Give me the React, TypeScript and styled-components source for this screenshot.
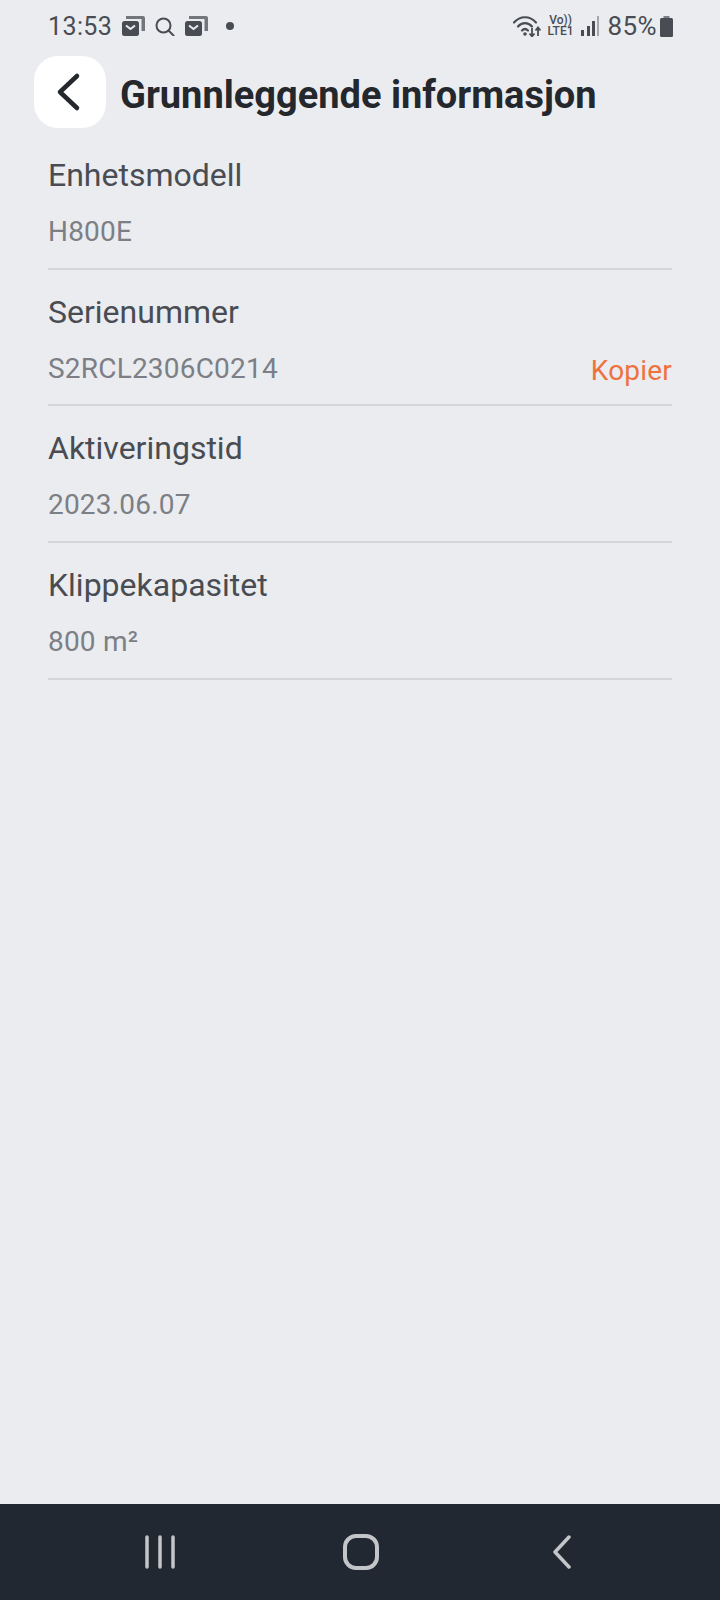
import React from "react"
import styled, { createGlobalStyle } from "styled-components"

const GlobalStyle = createGlobalStyle`
  html, body {
    margin: 0;
    padding: 0;
    background: #eaecf0;
    font-family: Roboto, "Liberation Sans", sans-serif;
  }
`

const Screen = styled.div`
  width: 720px;
  height: 1600px;
  display: flex;
  flex-direction: column;
  background: #eaecf0;
  overflow: hidden;
`

const StatusBar = styled.div`
  height: 52px;
  padding: 0 47px 0 48px;
  display: flex;
  align-items: center;
  justify-content: space-between;
  color: #494c52;
`

const StatusGroup = styled.div<{ $gap: number }>`
  display: flex;
  align-items: center;
  gap: ${props => props.$gap}px;
`

const Clock = styled.span`
  font-size: 25px;
  letter-spacing: 0.4px;
`

const Percent = styled.span`
  margin: 0 -4px 0 2px;
  font-size: 26px;
  letter-spacing: 0.4px;
`

const Dot = styled.span`
  width: 8px;
  height: 8px;
  margin-left: 8px;
  border-radius: 50%;
  background: #494c52;
`

const VoLte = styled.div`
  width: 26px;
  font-size: 12px;
  line-height: 11px;
  font-weight: 500;
  text-align: center;
  color: #494c52;
`

const Header = styled.div`
  height: 79px;
  padding-left: 34px;
  display: flex;
  align-items: center;
  gap: 14px;
`

const BackButton = styled.div`
  width: 72px;
  height: 72px;
  border-radius: 24px;
  background: #ffffff;
  display: flex;
  align-items: center;
  justify-content: center;
  padding-right: 5px;
  box-sizing: border-box;
`

const Title = styled.h1`
  margin: 7px 0 0;
  font-size: 38px;
  font-weight: 700;
  color: #24272c;
`

const List = styled.div`
  padding: 2px 48px 0;
  flex: 1;
`

const Row = styled.div`
  height: 136.7px;
  box-sizing: border-box;
  border-bottom: 2px solid #d3d5d9;
  padding-top: 20px;
`

const Label = styled.div`
  font-size: 32px;
  line-height: 44px;
  color: #494c52;
`

const ValueLine = styled.div`
  margin-top: 15px;
  display: flex;
  align-items: center;
  justify-content: space-between;
`

const Value = styled.span`
  font-size: 28px;
  letter-spacing: 0.2px;
  line-height: 40px;
  color: #7c7f85;
`

const CopyLink = styled.span`
  font-size: 28px;
  letter-spacing: 0.2px;
  line-height: 40px;
  color: #ee7240;
  position: relative;
  top: 2px;
`

const NavBar = styled.div`
  height: 96px;
  padding-left: 2px;
  background: #212832;
  display: flex;
  align-items: center;
  justify-content: center;
`

const NavSlot = styled.div`
  width: 201px;
  display: flex;
  justify-content: center;
`

const rows = [
  { label: "Enhetsmodell", value: "H800E" },
  { label: "Serienummer", value: "S2RCL2306C0214", copy: true },
  { label: "Aktiveringstid", value: "2023.06.07" },
  { label: "Klippekapasitet", value: "800 m²" },
]

const MailIcon = () => (
  <svg width="23" height="20" viewBox="0 0 23 20">
    <path d="M4 3V0h17a2 2 0 0 1 2 2v13h-3.500V3z" fill="#73767b" />
    <rect x="0" y="5" width="17" height="15" rx="2.500" fill="#494c52" />
    <path d="M4 9.500l4.500 3.500 4.500-3.500" fill="none" stroke="#eaecf0" strokeWidth="2" />
  </svg>
)

const SearchIcon = () => (
  <svg width="20" height="19" viewBox="0 0 20 19">
    <circle cx="8.500" cy="8.500" r="7" fill="none" stroke="#494c52" strokeWidth="2" />
    <path d="M13.500 13.500l5 5" stroke="#494c52" strokeWidth="2" strokeLinecap="round" />
  </svg>
)

const WifiIcon = () => (
  <svg width="28" height="21" viewBox="0 0 28 21">
    <g fill="none" stroke="#494c52" strokeWidth="2.200" strokeLinecap="round">
      <path d="M1 6.500C7-.5 17-.5 23 6.500" />
      <path d="M5 10.500c4-4.500 10-4.500 14 0" />
      <path d="M9 14.500c2-2 4-2 6 0" />
    </g>
    <circle cx="12" cy="18" r="1.800" fill="#494c52" />
    <path d="M19 12v8M16.500 17.500l2.500 3 2.500-3" fill="none" stroke="#494c52" strokeWidth="1.800" />
    <path d="M25 20v-8M22.500 14.500l2.500-3 2.500 3" fill="none" stroke="#494c52" strokeWidth="1.800" />
  </svg>
)

const SignalIcon = () => (
  <svg width="18" height="20" viewBox="0 0 18 20">
    <rect x="0" y="14" width="3" height="6" fill="#494c52" />
    <rect x="6" y="10" width="3" height="10" fill="#494c52" />
    <rect x="11" y="5" width="3" height="15" fill="#494c52" />
    <rect x="16" y="0" width="2" height="20" fill="#a5a7ab" />
  </svg>
)

const BatteryIcon = () => (
  <svg width="13" height="21" viewBox="0 0 13 21">
    <rect x="3.500" y="0" width="6" height="3" fill="#7c7f85" />
    <rect x="0" y="2" width="13" height="19" rx="1.500" fill="#494c52" />
  </svg>
)

export default function App() {
  return (
    <Screen>
      <GlobalStyle />
      <StatusBar>
        <StatusGroup $gap={10}>
          <Clock>13:53</Clock>
          <MailIcon />
          <SearchIcon />
          <MailIcon />
          <Dot />
        </StatusGroup>
        <StatusGroup $gap={7}>
          <WifiIcon />
          <VoLte>
            Vo))
            <br />
            LTE1
          </VoLte>
          <SignalIcon />
          <Percent>85%</Percent>
          <BatteryIcon />
        </StatusGroup>
      </StatusBar>
      <Header>
        <BackButton>
          <svg width="26" height="40" viewBox="0 0 26 40">
            <path d="M22 4L5 20l17 16" fill="none" stroke="#24272c" strokeWidth="4.500" strokeLinecap="round" strokeLinejoin="round" />
          </svg>
        </BackButton>
        <Title>Grunnleggende informasjon</Title>
      </Header>
      <List>
        {rows.map(row => (
          <Row key={row.label}>
            <Label>{row.label}</Label>
            <ValueLine>
              <Value>{row.value}</Value>
              {row.copy && <CopyLink>Kopier</CopyLink>}
            </ValueLine>
          </Row>
        ))}
      </List>
      <NavBar>
        <NavSlot>
          <svg width="32" height="34" viewBox="0 0 32 34">
            <g stroke="#c3c5c9" strokeWidth="3.500" strokeLinecap="round">
              <path d="M3 2v30M16 2v30M29 2v30" />
            </g>
          </svg>
        </NavSlot>
        <NavSlot>
          <svg width="36" height="36" viewBox="0 0 36 36">
            <rect x="2" y="2" width="32" height="32" rx="11" fill="none" stroke="#c3c5c9" strokeWidth="4" />
          </svg>
        </NavSlot>
        <NavSlot>
          <svg width="22" height="34" viewBox="0 0 22 34">
            <path d="M18 2L4 17l14 15" fill="none" stroke="#c3c5c9" strokeWidth="3.500" strokeLinecap="round" strokeLinejoin="round" />
          </svg>
        </NavSlot>
      </NavBar>
    </Screen>
  )
}
